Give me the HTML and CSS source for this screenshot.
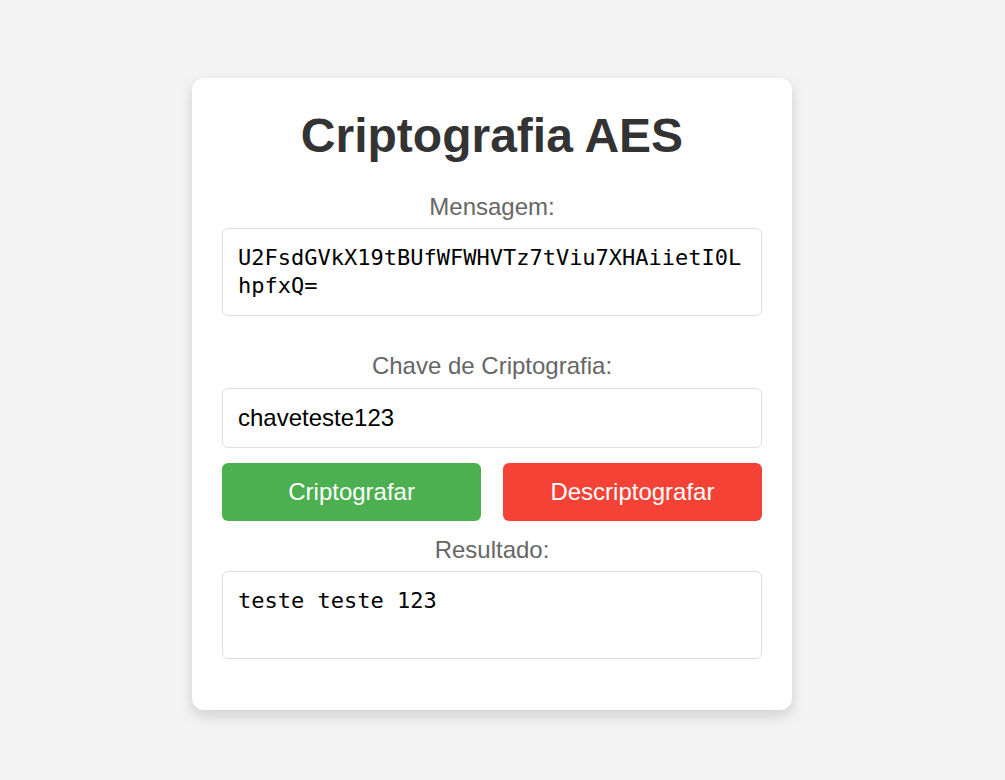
FILE: index.html
```html
<!DOCTYPE html>
<html lang="pt-BR">
<head>
<meta charset="utf-8">
<title>Criptografia AES</title>
<link rel="stylesheet" href="styles.css">
</head>
<body>
<div class="card">
  <h1 class="title">Criptografia AES</h1>
  <label class="label" for="msg">Mensagem:</label>
  <textarea id="msg" class="area area-msg" rows="2">U2FsdGVkX19tBUfWFWHVTz7tViu7XHAiietI0LhpfxQ=</textarea>
  <label class="label" for="key">Chave de Criptografia:</label>
  <input id="key" class="field" type="text" value="chaveteste123">
  <div class="actions">
    <button class="btn btn-enc" type="button">Criptografar</button>
    <button class="btn btn-dec" type="button">Descriptografar</button>
  </div>
  <label class="label" for="out">Resultado:</label>
  <textarea id="out" class="area area-out" rows="2" readonly>teste teste 123</textarea>
</div>
</body>
</html>
```

FILE: styles.css
```css
html, body {
  margin: 0;
  padding: 0;
}
body {
  background: #f4f4f4;
  font-family: "Liberation Sans", Arial, sans-serif;
  min-height: 100vh;
  box-sizing: border-box;
  display: flex;
  justify-content: center;
  align-items: flex-start;
  padding: 78px 21px 0 0;
}
.card {
  width: 600px;
  box-sizing: border-box;
  background: #fff;
  border-radius: 12px;
  padding: 30px;
  box-shadow: 0 6px 15px rgba(0, 0, 0, 0.15);
  display: flex;
  flex-direction: column;
}
.title {
  margin: 0 0 30px;
  font-size: 48px;
  line-height: normal;
  font-weight: bold;
  color: #333;
  text-align: center;
}
.label {
  display: block;
  font-size: 24px;
  line-height: normal;
  color: #666;
  text-align: center;
  margin-bottom: 7px;
}
.area {
  display: block;
  width: 100%;
  box-sizing: border-box;
  border: 1px solid #ddd;
  border-radius: 6px;
  padding: 15px;
  font-family: "DejaVu Sans Mono", "Liberation Mono", monospace;
  font-size: 22px;
  line-height: 28px;
  height: 88px;
  color: #000;
  resize: none;
  overflow: hidden;
  outline: none;
  margin: 0;
}
.area-msg {
  margin-bottom: 36px;
}
.area-out {
  margin-bottom: 21px;
}
.field {
  display: block;
  width: 100%;
  box-sizing: border-box;
  border: 1px solid #ddd;
  border-radius: 6px;
  padding: 15px;
  font-family: "Liberation Sans", Arial, sans-serif;
  font-size: 24px;
  line-height: normal;
  color: #000;
  outline: none;
  margin: 1px 0 15px;
}
.actions {
  display: flex;
  justify-content: space-between;
  margin-bottom: 15px;
}
.btn {
  width: 48%;
  border: none;
  border-radius: 6px;
  padding: 15px;
  font-family: "Liberation Sans", Arial, sans-serif;
  font-size: 24px;
  line-height: normal;
  color: #fff;
  cursor: pointer;
}
.btn-enc {
  background: #4caf50;
}
.btn-dec {
  background: #f44336;
}
```
